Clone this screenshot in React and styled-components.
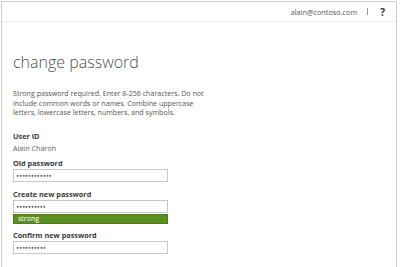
import styled, { createGlobalStyle } from "styled-components";

const GlobalStyle = createGlobalStyle`
    html, body {
        margin: 0;
        padding: 0;
        background: #ffffff;
        width: 400px;
        height: 267px;
        overflow: hidden;
    }
    body {
        font-family: "Open Sans", "Noto Sans", sans-serif;
        color: #444444;
    }
`;

const Frame = styled.div`
    margin: 1px 3px 0 1px;
    height: 266px;
    border: 1px solid #cfcfcf;
    border-bottom: none;
    box-sizing: border-box;
    display: flex;
    flex-direction: column;
`;

const Header = styled.div`
    height: 19px;
    border-bottom: 1px solid #ececec;
    display: flex;
    align-items: center;
    justify-content: flex-end;
    padding-right: 11px;
    gap: 10px;
    flex-shrink: 0;
`;

const Email = styled.span`
    font-size: 7.3px;
    color: #555555;
`;

const Divider = styled.span`
    width: 1px;
    height: 7px;
    background: #9a9a9a;
`;

const Help = styled.span`
    font-size: 10px;
    font-weight: 700;
    color: #333333;
    margin-left: 2px;
`;

const Content = styled.div`
    padding: 29px 0 0 11px;
    display: flex;
    flex-direction: column;
`;

const Title = styled.h1`
    margin: 0;
    font-size: 16px;
    font-weight: 300;
    color: #505050;
    line-height: 22px;
`;

const Description = styled.p`
    margin: 16px 0 0;
    font-size: 7.1px;
    line-height: 9.7px;
    color: #555555;
    white-space: nowrap;
`;

const Field = styled.div`
    display: flex;
    flex-direction: column;
    margin-top: ${props => props.$top}px;
`;

const Label = styled.div`
    font-size: 7.3px;
    font-weight: 700;
    color: #3a3a3a;
    line-height: 10px;
`;

const Value = styled.div`
    font-size: 7.2px;
    color: #606060;
    line-height: 10px;
    margin-top: 2px;
`;

const Input = styled.div`
    margin-top: 1px;
    width: 155px;
    height: 13px;
    box-sizing: border-box;
    border: 1px solid #c6c6c6;
    display: flex;
    align-items: center;
    padding-left: 2px;
    font-size: 6px;
    letter-spacing: -0.6px;
    color: #444444;
    font-family: "DejaVu Sans", sans-serif;
`;

const Strength = styled.div`
    margin-top: 1px;
    width: 155px;
    height: 10px;
    box-sizing: border-box;
    background: #5b8f22;
    border: 1px solid #4c7e18;
    color: #ffffff;
    font-size: 7px;
    line-height: 8px;
    padding-left: 4px;
`;

function PasswordField({ label, dots, top, strength }) {
    return (
        <Field $top={top}>
            <Label>{label}</Label>
            <Input>{dots}</Input>
            {strength && <Strength>{strength}</Strength>}
        </Field>
    );
}

export default function App() {
    return (
        <>
            <GlobalStyle />
            <Frame>
                <Header>
                    <Email>alain@contoso.com</Email>
                    <Divider />
                    <Help>?</Help>
                </Header>
                <Content>
                    <Title>change password</Title>
                    <Description>
                        Strong password required. Enter 8-256 characters. Do not
                        <br />
                        include common words or names. Combine uppercase
                        <br />
                        letters, lowercase letters, numbers, and symbols.
                    </Description>
                    <Field $top={13}>
                        <Label>User ID</Label>
                        <Value>Alain Charon</Value>
                    </Field>
                    <PasswordField label="Old password" dots="••••••••••••" top={5} />
                    <PasswordField
                        label="Create new password"
                        dots="••••••••••"
                        top={7}
                        strength="strong"
                    />
                    <PasswordField label="Confirm new password" dots="••••••••••" top={6} />
                </Content>
            </Frame>
        </>
    );
}
